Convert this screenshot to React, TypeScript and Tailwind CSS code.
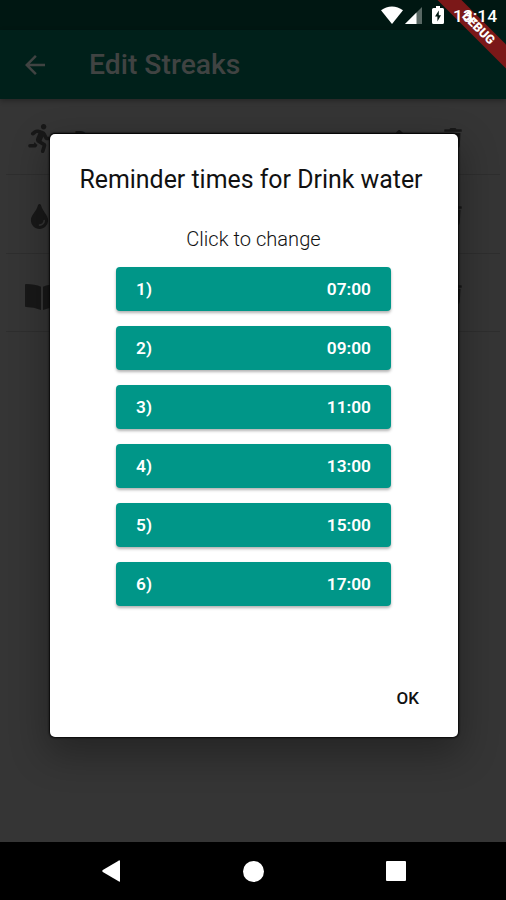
import { FaRunning, FaTint, FaTrash, FaPen } from "react-icons/fa";
import { MdArrowBack } from "react-icons/md";

const reminderTimes = ["07:00", "09:00", "11:00", "13:00", "15:00", "17:00"];

export default function App() {
  return (
    <div className="relative flex h-[900px] w-[506px] flex-col overflow-hidden bg-[#353535] font-['Roboto',sans-serif]">
      <StatusBar />
      <header className="flex h-[69px] shrink-0 items-center bg-[#00201a] pl-[20px] text-[#404342] shadow-[0_2px_5px_rgba(0,0,0,0.3)]">
        <MdArrowBack className="h-[30px] w-[30px]" />
        <h1 className="mt-[2px] ml-[39px] text-[28.3px] leading-none font-medium">Edit Streaks</h1>
      </header>
      <StreakList />
      <NavigationBar />
      {/* Dialog over the dimmed page */}
      <div className="absolute inset-0 flex items-start justify-center pt-[134px] pl-[2px]">
        <ReminderDialog />
      </div>
      <DebugBanner />
    </div>
  );
}

const StatusBar = () => (
  <div className="flex h-[30px] shrink-0 items-center justify-end bg-[#001712] pr-[9px] text-white">
    <svg className="h-[18px] w-[22px]" viewBox="0 0 22 18" fill="currentColor">
      <path d="M0 4.200C6.400-.9 15.600-.9 22 4.200L11 18z" />
    </svg>
    <svg className="ml-[2px] h-[17px] w-[17px]" viewBox="0 0 17 17" fill="currentColor">
      <path d="M17 0v17H0z" opacity=".35" />
      <path d="M11.500 5.500V17H0z" />
    </svg>
    <svg className="ml-[10px] h-[18px] w-[12px]" viewBox="0 0 12 18">
      <path d="M4 0h4v2h2.500Q12 2 12 3.500v13Q12 18 10.500 18h-9Q0 18 0 16.500v-13Q0 2 1.500 2H4z" fill="currentColor" />
      <path d="M6.800 4.500 3 10.500h2.400v5L9 9.300H6.800z" fill="#001712" />
    </svg>
    {/* The clock stays above the debug ribbon */}
    <span className="relative z-10 mt-[3px] ml-[9px] w-[44px] text-right text-[17.4px] leading-none font-medium">13:14</span>
  </div>
);

const StreakList = () => (
  <main className="flex grow flex-col px-[6px] text-[#181818]">
    <div className="flex h-[76px] items-center border-b border-[#2e2e2e] pl-[22px]">
      <FaRunning className="mt-[3px] h-[29px] w-[24px]" />
      <span className="mt-[4px] ml-[22px] text-[20px] font-medium">Run</span>
      <FaPen className="mt-[4px] mr-[41px] ml-auto h-[18px] w-[18px]" />
      <FaTrash className="mt-[2px] mr-[38px] h-[20px] w-[18px]" />
    </div>
    <div className="flex h-[79px] items-center border-b border-[#2e2e2e] pl-[21px]">
      <FaTint className="mt-[4px] h-[25px] w-[25px] -scale-x-100" />
      <FaTrash className="mt-[2px] mr-[38px] ml-auto h-[20px] w-[18px]" />
    </div>
    <div className="flex h-[78px] items-center border-b border-[#2e2e2e] pl-[19px]">
      <svg className="mt-[9px] h-[26px] w-[34px]" viewBox="0 0 34 26" fill="currentColor">
        <path d="M0 1Q0 0 1 0Q10 0 16 2.800V26Q9 23 1 23Q0 23 0 22zM18 2.800Q24 0 33 0Q34 0 34 1v21Q34 23 33 23Q25 23 18 26z" />
      </svg>
      <FaTrash className="mt-[2px] mr-[38px] ml-auto h-[20px] w-[18px]" />
    </div>
  </main>
);

const ReminderDialog = () => (
  <section className="flex h-[603px] w-[408px] flex-col rounded-[5px] bg-white pr-[1px] text-[#111] shadow-[0_0_2px_1px_#080808,0_-1px_1px_#000,0_14px_36px_4px_rgba(0,0,0,0.3)]">
    <h2 className="mt-[31px] -mr-[1px] -ml-[6px] text-center text-[24.9px] leading-[30px] whitespace-nowrap">
      Reminder times for Drink water
    </h2>
    <p className="mt-[32px] text-center text-[20.1px] leading-[24px] font-light text-[#111]">Click to change</p>
    <div className="mx-auto mt-[16px] flex w-[275px] flex-col gap-[15px]">
      {reminderTimes.map((time, index) => (
        <button
          key={time}
          className="flex h-[44px] items-center justify-between rounded-[4px] bg-[#009688] px-[20px] pt-[2px] text-[17.3px] font-semibold text-white shadow-[0_2px_3px_rgba(0,0,0,0.3)]"
        >
          <span>{index + 1})</span>
          <span>{time}</span>
        </button>
      ))}
    </div>
    <button className="mt-auto mr-[38px] mb-[27px] self-end text-[17px] leading-[24px] font-medium">OK</button>
  </section>
);

const NavigationBar = () => (
  <nav className="flex h-[58px] shrink-0 items-center justify-between bg-black pr-[100px] pl-[101px]">
    <svg className="h-[22px] w-[20px]" viewBox="0 0 20 22" fill="#fff">
      <path d="M19 .8v20.400Q19 22 18 21.500L1.800 12Q.5 11 1.800 10L18 .5Q19 0 19 .8z" />
    </svg>
    <span className="h-[21px] w-[21px] rounded-full bg-white" />
    <span className="h-[20px] w-[20px] rounded-[1px] bg-white" />
  </nav>
);

const DebugBanner = () => (
  <div className="absolute top-[20px] right-[-37px] flex h-[17px] w-[130px] rotate-45 items-center justify-center bg-[#7b1818] text-[12.500px] leading-none font-black text-white">
    DEBUG
  </div>
);
